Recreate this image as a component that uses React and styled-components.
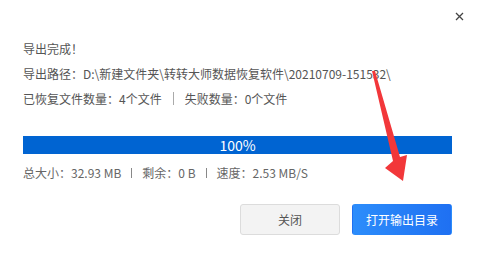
import React from "react";
import styled, { createGlobalStyle } from "styled-components";

const Global = createGlobalStyle`
  html, body { margin: 0; padding: 0; background: #fff; }
  body { font-family: "Noto Sans CJK SC", "Noto Sans", sans-serif; }
`;

const Dialog = styled.div`
  position: relative;
  width: 478px;
  height: 254px;
  box-sizing: border-box;
  padding: 36px 26px 0 23px;
  display: flex;
  flex-direction: column;
  background: #fff;
  overflow: hidden;
`;

const Close = styled.button`
  position: absolute;
  top: 9px;
  right: 12px;
  width: 14px;
  height: 14px;
  padding: 0;
  border: 0;
  background: none;
  display: flex;
  align-items: center;
  justify-content: center;
  cursor: pointer;
`;

const Line = styled.div`
  font-size: 12px;
  line-height: 25px;
  color: #555;
  white-space: nowrap;
  display: flex;
  align-items: center;
`;

const Bar = styled.div`
  margin-top: 25px;
  height: 18px;
  background: #0064d2;
  position: relative;
  overflow: hidden;
`;

const Fill = styled.div`
  height: 100%;
  background: #0064d2;
`;

const BarLabel = styled.span`
  position: absolute;
  inset: 0;
  display: flex;
  align-items: center;
  justify-content: center;
  color: #fff;
  font-size: 14px;
  line-height: 18px;
`;

const Stats = styled.div`
  margin-top: 9px;
  font-size: 12px;
  line-height: 20px;
  color: #666;
  white-space: nowrap;
  display: flex;
  align-items: center;
`;

const Sep = styled.span`
  display: inline-block;
  width: 1px;
  height: ${(p) => p.$h}px;
  background: ${(p) => p.$c};
  margin: 0 ${(p) => p.$m}px;
`;

const Actions = styled.div`
  margin-top: 21px;
  display: flex;
  justify-content: flex-end;
  gap: 12px;
`;

const Button = styled.button`
  width: 100px;
  height: 31px;
  box-sizing: border-box;
  border-radius: 3px;
  font-family: inherit;
  font-size: 12px;
  padding: 0;
  cursor: pointer;
  border: 1px solid ${(p) => (p.$primary ? "transparent" : "#dcdcdc")};
  background: ${(p) =>
    p.$primary ? "linear-gradient(90deg, #2c8dfb, #1f70f2)" : "#f3f3f3"};
  color: ${(p) => (p.$primary ? "#fff" : "#555")};
`;

const Arrow = styled.svg`
  position: absolute;
  left: 0;
  top: 0;
  pointer-events: none;
`;

export default function App() {
  const progress = 100;
  return (
    <>
      <Global />
      <Dialog>
        <Close aria-label="关闭">
          <svg width="9" height="9" viewBox="0 0 9 9">
            <path d="M1 1L8 8M8 1L1 8" stroke="#444" strokeWidth="1.3" />
          </svg>
        </Close>
        <Line>导出完成！</Line>
        <Line>导出路径：D:\新建文件夹\转转大师数据恢复软件\20210709-151532\</Line>
        <Line>
          已恢复文件数量：4个文件
          <Sep $h={13} $c="#aaa" $m={11} />
          失败数量：0个文件
        </Line>
        <Bar>
          <Fill style={{ width: `${progress}%` }} />
          <BarLabel>{progress}%</BarLabel>
        </Bar>
        <Stats>
          总大小：32.93 MB
          <Sep $h={10} $c="#888" $m={10} />
          剩余：0 B
          <Sep $h={10} $c="#888" $m={10} />
          速度：2.53 MB/S
        </Stats>
        <Actions>
          <Button>关闭</Button>
          <Button $primary>打开输出目录</Button>
        </Actions>
        <Arrow width="478" height="254" viewBox="0 0 478 254">
          <polygon
            points="372,71 375,71 400,157 407,155 403,181 385,168 393,161"
            fill="#f2373a"
          />
        </Arrow>
      </Dialog>
    </>
  );
}
